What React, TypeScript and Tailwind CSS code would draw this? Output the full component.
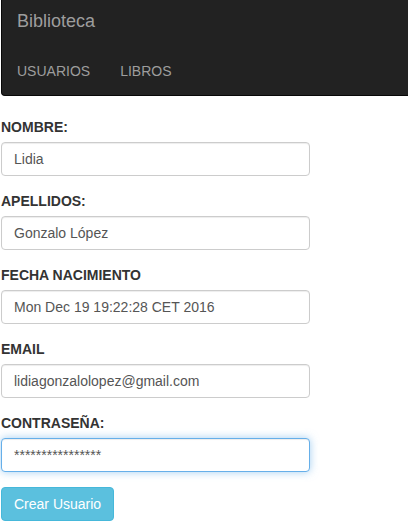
const FIELDS = [
  { label: 'NOMBRE:', value: 'Lidia' },
  { label: 'APELLIDOS:', value: 'Gonzalo López' },
  { label: 'FECHA NACIMIENTO', value: 'Mon Dec 19 19:22:28 CET 2016' },
  { label: 'EMAIL', value: 'lidiagonzalolopez@gmail.com' },
  { label: 'CONTRASEÑA:', value: '****************', focused: true },
];

export default function App() {
  return (
    <div className="min-h-screen bg-white font-['Liberation_Sans',Arial,sans-serif] text-[14px] text-[#333]">
      {/* Navbar */}
      <nav className="ml-px border-b border-l border-[#080808] rounded-bl-[4px] bg-[#222] text-[#9d9d9d]">
        <div className="pl-[15px] pt-[11px]">
          <a className="block h-5 text-[18px] leading-5">Biblioteca</a>
        </div>
        <ul className="flex pt-[30px] pb-[14px]">
          <li className="px-[15px] leading-5">USUARIOS</li>
          <li className="px-[15px] leading-5">LIBROS</li>
        </ul>
      </nav>

      {/* Form */}
      <form className="pl-px pt-[21px] w-[310px]">
        {FIELDS.map((f) => (
          <div key={f.label} className="mb-[15px]">
            <label className="block mb-[5px] font-bold leading-5">{f.label}</label>
            <input
              readOnly
              value={f.value}
              className={
                f.focused
                  ? 'block w-full h-[34px] px-3 py-1.5 rounded-[4px] border border-[#66afe9] bg-white text-[#555] leading-5 outline-none shadow-[inset_0_1px_1px_rgba(0,0,0,0.075),0_0_8px_rgba(102,175,233,0.6)]'
                  : 'block w-full h-[34px] px-3 py-1.5 rounded-[4px] border border-[#ccc] bg-white text-[#555] leading-5 outline-none shadow-[inset_0_1px_1px_rgba(0,0,0,0.075)]'
              }
            />
          </div>
        ))}
        <button
          type="button"
          className="h-[34px] px-3 py-1.5 rounded-[4px] border border-[#46b8da] bg-[#5bc0de] text-white leading-5"
        >
          Crear Usuario
        </button>
      </form>
    </div>
  );
}
